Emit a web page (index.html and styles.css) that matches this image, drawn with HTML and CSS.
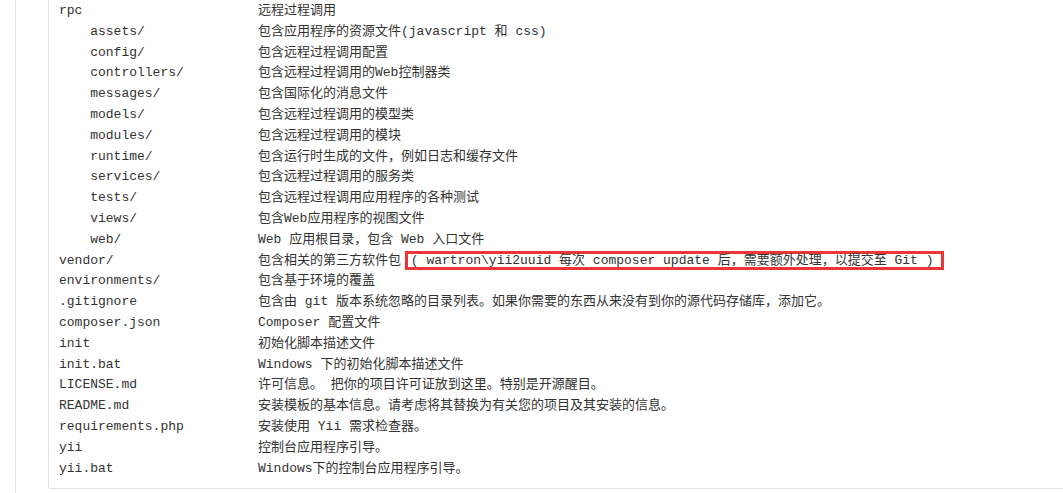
FILE: index.html
```html
<!DOCTYPE html>
<html lang="zh-CN">
<head>
  <meta charset="UTF-8" />
  <meta name="viewport" content="width=device-width, initial-scale=1.0" />
  <title>目录结构</title>
  <link rel="stylesheet" href="styles.css">
</head>
<body>

  <div class="page">
    <div class="box">
      <div class="tree">
        <div class="row"><span class="name">rpc</span><span class="desc">远程过程调用</span></div>
        <div class="row"><span class="name sub">assets/</span><span class="desc">包含应用程序的资源文件(javascript 和 css)</span></div>
        <div class="row"><span class="name sub">config/</span><span class="desc">包含远程过程调用配置</span></div>
        <div class="row"><span class="name sub">controllers/</span><span class="desc">包含远程过程调用的Web控制器类</span></div>
        <div class="row"><span class="name sub">messages/</span><span class="desc">包含国际化的消息文件</span></div>
        <div class="row"><span class="name sub">models/</span><span class="desc">包含远程过程调用的模型类</span></div>
        <div class="row"><span class="name sub">modules/</span><span class="desc">包含远程过程调用的模块</span></div>
        <div class="row"><span class="name sub">runtime/</span><span class="desc">包含运行时生成的文件，例如日志和缓存文件</span></div>
        <div class="row"><span class="name sub">services/</span><span class="desc">包含远程过程调用的服务类</span></div>
        <div class="row"><span class="name sub">tests/</span><span class="desc">包含远程过程调用应用程序的各种测试</span></div>
        <div class="row"><span class="name sub">views/</span><span class="desc">包含Web应用程序的视图文件</span></div>
        <div class="row"><span class="name sub">web/</span><span class="desc">Web 应用根目录，包含 Web 入口文件</span></div>
        <div class="row"><span class="name">vendor/</span><span class="desc">包含相关的第三方软件包 <span class="note">( wartron\yii2uuid 每次 composer update 后，需要额外处理，以提交至 Git )</span></span></div>
        <div class="row"><span class="name">environments/</span><span class="desc">包含基于环境的覆盖</span></div>
        <div class="row"><span class="name">.gitignore</span><span class="desc">包含由 git 版本系统忽略的目录列表。如果你需要的东西从来没有到你的源代码存储库，添加它。</span></div>
        <div class="row"><span class="name">composer.json</span><span class="desc">Composer 配置文件</span></div>
        <div class="row"><span class="name">init</span><span class="desc">初始化脚本描述文件</span></div>
        <div class="row"><span class="name">init.bat</span><span class="desc">Windows 下的初始化脚本描述文件</span></div>
        <div class="row"><span class="name">LICENSE.md</span><span class="desc">许可信息。 把你的项目许可证放到这里。特别是开源醒目。</span></div>
        <div class="row"><span class="name">README.md</span><span class="desc">安装模板的基本信息。请考虑将其替换为有关您的项目及其安装的信息。</span></div>
        <div class="row"><span class="name">requirements.php</span><span class="desc">安装使用 Yii 需求检查器。</span></div>
        <div class="row"><span class="name">yii</span><span class="desc">控制台应用程序引导。</span></div>
        <div class="row"><span class="name">yii.bat</span><span class="desc">Windows下的控制台应用程序引导。</span></div>
      </div>
    </div>
  </div>

</body>
</html>
```

FILE: styles.css
```css
* { box-sizing: border-box; }
html, body { height: 100%; }
body {
  margin: 0;
  padding: 0;
  background-color: #fff;
  color: #333;
  font-family: 'Liberation Mono', 'Noto Sans CJK SC', monospace;
  font-size: 13px;
}
.page {
  min-height: 100%;
  margin-left: 15px;
  padding-left: 32px;
  border-left: 1px solid #e2e2e2;
}
.box {
  border-left: 1px solid #e2e2e2;
  border-bottom: 1px solid #e2e2e2;
  border-radius: 0 0 0 3px;
  padding: 1px 0 9px 10px;
}
.tree { display: flex; flex-direction: column; }
.row {
  display: grid;
  grid-template-columns: 199px 1fr;
  line-height: 20.8px;
  white-space: pre;
}
.name.sub { padding-left: 31.2px; }
.note {
  display: inline-block;
  line-height: 13px;
  padding: 0 8px 0 3px;
  margin-left: -4px;
  border: 3px solid #ea3636;
}
```
